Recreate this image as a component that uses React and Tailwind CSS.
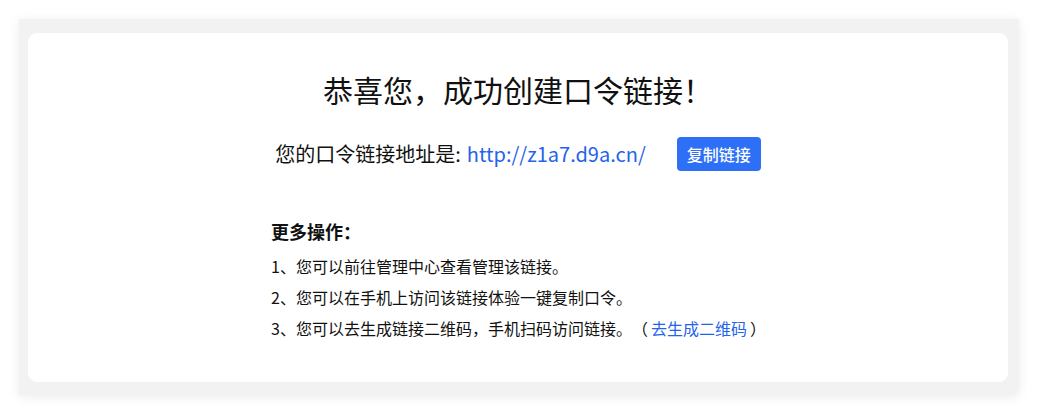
export default function App() {
  return (
    <div
      className="w-[1037px] h-[414px] bg-white pt-[19px] pl-[19px] [text-spacing-trim:space-all]"
      style={{ fontFamily: '"Noto Sans CJK SC", "Noto Sans", sans-serif' }}
    >
      <div className="w-[1000px] h-[376px] bg-[#f2f2f2] rounded-br-[6px] pl-[9px] pr-[11px] pt-[14px] pb-[13px] shadow-[0_2px_12px_rgba(0,0,0,0.08)]">
        <div className="h-full bg-white rounded-[9px] pt-[36px] text-[#111]">
          <h1 className="text-center text-[30px] leading-[40px] font-normal">恭喜您，成功创建口令链接！</h1>
          <div className="mt-[28px] flex items-center justify-center">
            <span className="text-[20px] leading-[28px]">您的口令链接地址是: </span>
            <a className="ml-[6px] text-[20px] leading-[28px] text-[#2563eb]">http://z1a7.d9a.cn/</a>
            <button className="ml-[31px] w-[84px] h-[34px] rounded-[4px] bg-[#2d6ff6] text-white text-[16px] font-medium">复制链接</button>
          </div>
          <div className="ml-[243px] mt-[46px] whitespace-nowrap">
            <div className="text-[18px] leading-[28px] font-bold">更多操作：</div>
            <ul className="mt-[6px] text-[16px] leading-[31px]">
              <li>1、您可以前往管理中心查看管理该链接。</li>
              <li>2、您可以在手机上访问该链接体验一键复制口令。</li>
              <li>
                3、您可以去生成链接二维码，手机扫码访问链接。（<a className="px-[3px] text-[#2563eb]">去生成二维码</a>）
              </li>
            </ul>
          </div>
        </div>
      </div>
    </div>
  );
}
